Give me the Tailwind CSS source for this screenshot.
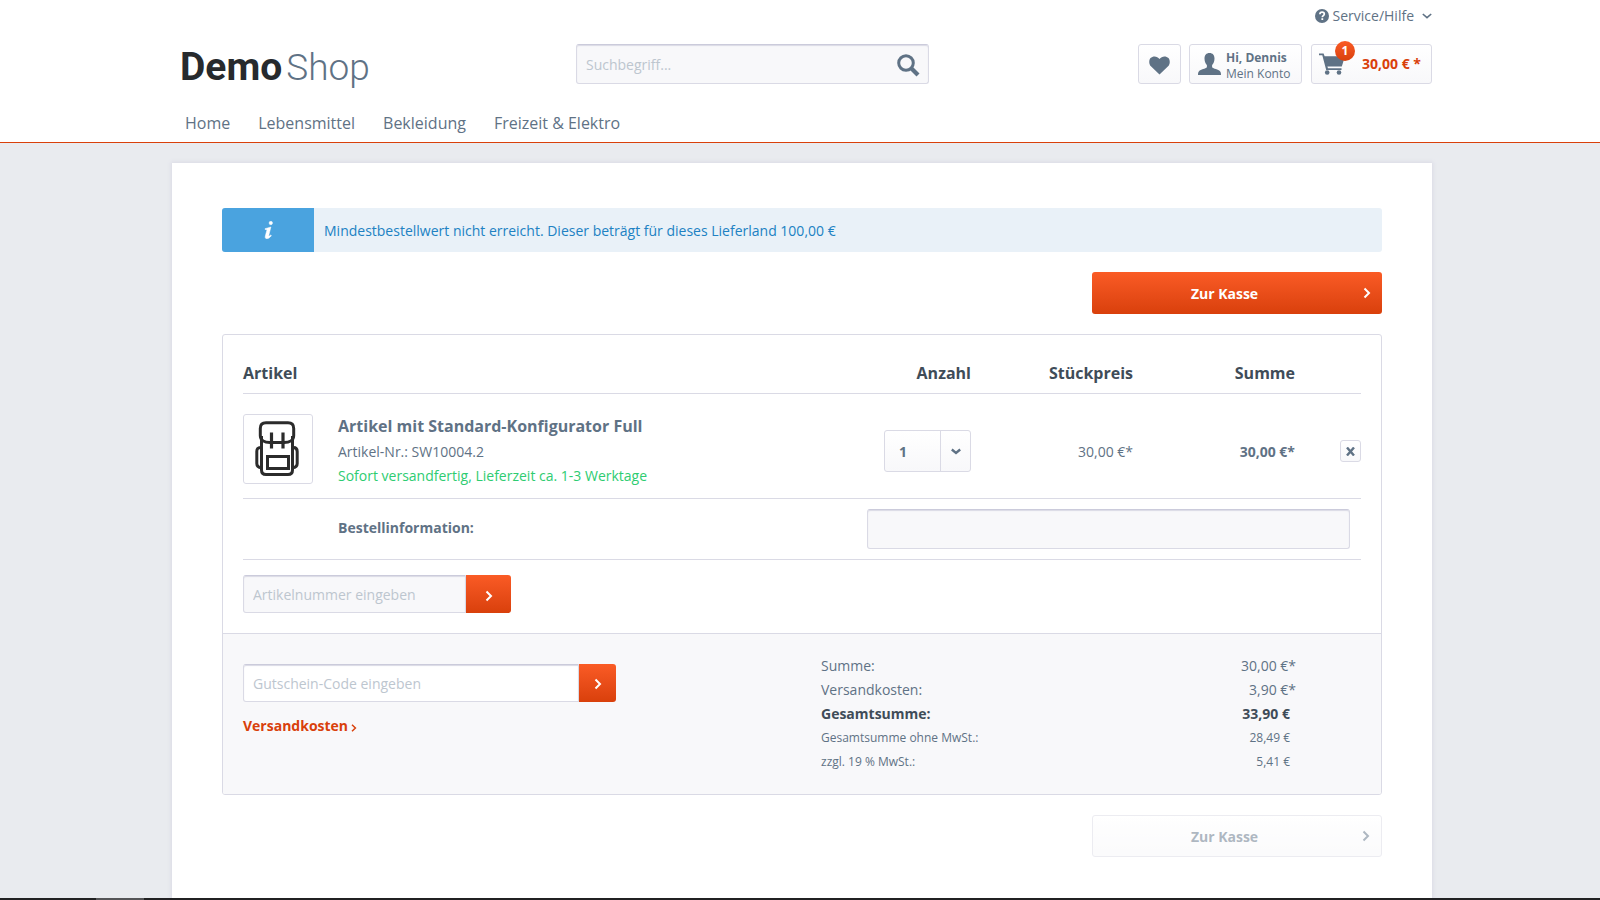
<!DOCTYPE html>
<html lang="de">
<head>
<meta charset="utf-8">
<title>Warenkorb | DemoShop</title>
<script src="https://cdn.jsdelivr.net/npm/@tailwindcss/browser@4"></script>
</head>
<body class="flex min-h-screen flex-col bg-[#e9ebef] font-['Open_Sans',sans-serif] text-sm text-[#5f7285]">
<svg class="hidden" aria-hidden="true">
  <symbol id="arrow-right" viewBox="0 0 8 12"><path d="M1.5 1.5 6 6l-4.500 4.500" fill="none" stroke="currentColor" stroke-width="2"/></symbol>
  <symbol id="arrow-down" viewBox="0 0 10 6"><path d="M.8 1 5 4.600 9.200 1" fill="none" stroke="currentColor" stroke-width="1.600"/></symbol>
</svg>

<header class="border-b border-[#d9400b] bg-white pl-1">
  <div class="mx-auto max-w-[1260px]">
    <div class="flex h-11 justify-end">
      <button type="button" class="flex h-8 items-center text-sm">
        <svg class="mr-1 size-3.5" viewBox="0 0 14 14"><circle cx="7" cy="7" r="7" fill="#5f7285"/><path d="M4.900 5.300C4.900 3.900 5.800 3.100 7.100 3.100s2.200.8 2.200 1.900c0 1.600-2 1.600-2 3.200" fill="none" stroke="#fff" stroke-width="1.700"/><rect x="6.400" y="9.200" width="1.800" height="1.800" fill="#fff"/></svg>
        Service/Hilfe
        <svg class="ml-2 h-1.5 w-2.5"><use href="#arrow-down"/></svg>
      </button>
    </div>
    <div class="flex h-10 items-start">
      <a href="#" class="flex w-[404px] shrink-0 items-baseline gap-1 pl-2 font-['Roboto',sans-serif] leading-[46px]" aria-label="DemoShop"><span class="text-[39px] font-bold text-[#272a2d]">Demo</span><span class="text-[37px] font-light">Shop</span></a>
      <form class="relative w-[353px]">
        <input type="search" aria-label="Suchbegriff" placeholder="Suchbegriff..." class="block h-10 w-full rounded-[3px] border border-[#dadae5] border-t-[#cbcbdb] bg-[#f8f8fa] pr-12 pl-[9px] shadow-[inset_0_1px_1px_#dadae5] placeholder:text-[#bdc6cf]">
        <button type="submit" aria-label="Suchen" class="absolute top-2.5 right-[9px]"><svg class="size-[23px]" viewBox="0 0 23 23" fill="none" stroke="#5f7285"><circle cx="9" cy="9" r="7.300" stroke-width="3"/><path d="m14.500 14.500 6.500 6.500" stroke-width="4.200"/></svg></button>
      </form>
      <div class="ml-auto flex gap-2">
        <a href="#" aria-label="Merkzettel" class="flex h-10 w-[43px] items-center justify-center rounded-[3px] border border-[#dadae5] bg-linear-to-b from-white to-[#f8f8fa]"><svg class="mt-0.5 h-[19px] w-[21px]" viewBox="0 0 22 19" preserveAspectRatio="none"><path d="M11 18.500 2 10.300C-.3 8-.2 4 1.600 2.100 4-.3 8.600-.3 11 3 13.400-.3 18-.3 20.400 2.100c1.800 1.900 1.900 5.900-.4 8.200z" fill="#5f7285"/></svg></a>
        <a href="#" class="flex h-10 w-[113px] items-center gap-[5px] rounded-[3px] border border-[#dadae5] bg-linear-to-b from-white to-[#f8f8fa] pl-2"><svg class="h-[22px] w-[23px]" viewBox="0 0 23 22"><path d="M11.500 0c3.200 0 5 2.100 5 5.400 0 3-1.200 5.400-2.400 6.700v2.200c1.200 1.400 6.300 2.200 7.900 3.900.8.900 1 2 1 3.800H0c0-1.800.2-2.900 1-3.800 1.600-1.700 6.700-2.500 7.900-3.900v-2.200C7.700 10.800 6.500 8.400 6.500 5.400c0-3.300 1.800-5.400 5-5.400z" fill="#5f7285"/></svg><span class="mt-1 text-xs leading-4"><strong class="block">Hi, Dennis</strong>Mein Konto</span></a>
        <a href="#" aria-label="Warenkorb" class="relative ml-px flex h-10 w-[121px] items-center gap-[17px] rounded-[3px] border border-[#dadae5] bg-linear-to-b from-white to-[#f8f8fa] pl-[7px]"><svg class="h-[22px] w-[26px]" viewBox="0 0 26 22" fill="#5f7285"><path d="M0 .5h4.600l1 2.800H26l-3.200 10.200H8.400l.6 1.800h13.500v1.700H7.200L3.300 2.300H0z"/><circle cx="8.200" cy="19.500" r="2.300"/><circle cx="20" cy="19.500" r="2.300"/></svg><span class="absolute -top-1 left-[23px] size-5 rounded-full bg-linear-to-b from-[#fa5b25] to-[#d9400b] text-center text-xs leading-5 font-bold text-white">1</span><strong class="text-[#d9400b]">30,00&nbsp;€&nbsp;*</strong></a>
      </div>
    </div>
    <nav class="flex h-[58px] items-center gap-7 pt-5 pl-[13px] text-base">
      <a href="#">Home</a><a href="#">Lebensmittel</a><a href="#">Bekleidung</a><a href="#">Freizeit &amp; Elektro</a>
    </nav>
  </div>
</header>

<div class="flex flex-1 flex-col pt-5 pl-1">
  <main class="mx-auto w-full max-w-[1260px] flex-1 bg-white px-[50px] pt-[45px] pb-10 shadow-[0_0_4px_1px_#dadae5]">
    <div role="status" class="flex h-11 overflow-hidden rounded-[3px] bg-[#e9f1f8] text-[#2081c3]">
      <div class="flex w-[92px] items-center justify-center bg-[#4aa3df] pl-0.5"><svg class="h-[18px] w-2.5" viewBox="0 0 10 18" fill="#fff" stroke="#fff" stroke-width=".5"><circle cx="6.800" cy="2" r="1.700"/><path d="M1 7.700 6.900 6 4.800 14.300c-.2.900.4 1 1.900-.4l.7.800C5.800 16.800 4.300 17.700 2.800 17.700c-1.500 0-1.900-1.100-1.500-2.600l1.500-5.700c.2-.7-.3-1-1.800-1z"/></svg></div>
      <p class="self-center pt-0.5 pl-2.5">Mindestbestellwert nicht erreicht. Dieser beträgt für dieses Lieferland 100,00 €</p>
    </div>

    <div class="mt-5 flex justify-end">
      <button type="button" class="flex h-[42px] w-[290px] items-center rounded-[3px] bg-linear-to-b from-[#fa5b25] to-[#d9400b] pr-[11px] pl-3 font-bold text-white"><span class="flex-1 pt-0.5 pr-[18px]">Zur Kasse</span><svg class="h-3 w-2"><use href="#arrow-right"/></svg></button>
    </div>

    <section class="mt-5 overflow-hidden rounded-[3px] border border-[#dadae5]">
      <div class="px-5 pb-5">
        <table class="w-full border-collapse">
          <thead>
            <tr class="h-[58px] border-b border-[#dadae5] text-base text-[#3f4c58]">
              <th class="pt-[18px] text-left">Artikel</th><th class="w-[162px] pt-[18px] text-right">Anzahl</th><th class="w-[162px] pt-[18px] text-right">Stückpreis</th><th class="w-[162px] pt-[18px] text-right">Summe</th><th class="w-[66px]"></th>
            </tr>
          </thead>
          <tbody>
            <tr class="h-[105px] border-b border-[#dadae5]">
              <td>
                <div class="flex gap-[25px] pt-1">
                  <a href="#" aria-label="Artikel mit Standard-Konfigurator Full" class="mt-1.5 flex size-[70px] items-center justify-center rounded-[3px] border border-[#dadae5] pr-0.5"><svg class="h-14 w-11" viewBox="0 0 44 56" fill="none" stroke="#2b2b2b" stroke-width="3"><path d="M6.500 15v34c0 2.800 1.700 4.500 4.500 4.500h22c2.800 0 4.500-1.700 4.500-4.500V15"/><path d="M11 1.800h22c4 0 5.700 2.200 5.700 5.700v7c0 4.500-4 7-9.700 7H15c-5.700 0-9.700-2.500-9.700-7v-7c0-3.500 1.700-5.700 5.700-5.700z"/><path d="M16.500 11.500v16M28 11.500v16" stroke-width="3.200"/><rect x="12.500" y="35.500" width="21" height="12"/><path d="M6.500 26.500h-1c-2.500 0-3.700 1.500-3.700 4v12c0 2.500 1.500 4 4.700 4.300M37.500 26.500h1c2.500 0 3.700 1.500 3.700 4v12c0 2.500-1.500 4-4.700 4.300"/></svg></a>
                  <div class="mt-1 leading-6"><a href="#" class="block text-base leading-7 font-bold">Artikel mit Standard-Konfigurator Full</a><p>Artikel-Nr.: SW10004.2</p><p class="text-[#2ecc71]">Sofort versandfertig, Lieferzeit ca. 1-3 Werktage</p></div>
                </div>
              </td>
              <td class="pt-2.5">
                <div class="relative ml-auto w-[87px]">
                  <select aria-label="Anzahl" class="block h-[42px] w-full appearance-none rounded-[3px] border border-[#dadae5] bg-linear-to-b from-white to-[#f8f8fa] pt-0.5 pl-3.5 font-bold"><option>1</option><option>2</option><option>3</option></select>
                  <span class="pointer-events-none absolute inset-y-0 right-0 flex w-[31px] items-center justify-center border-l border-[#dadae5] pt-0.5"><svg class="h-[7px] w-2.5" viewBox="0 0 10 7"><path d="M.8 1.500 5 4.900 9.200 1.500" fill="none" stroke="#5f7285" stroke-width="2.400"/></svg></span>
                </div>
              </td>
              <td class="pt-3 text-right">30,00&nbsp;€*</td>
              <td class="pt-3 text-right font-bold">30,00&nbsp;€*</td>
              <td class="pt-2.5"><button type="button" aria-label="Artikel entfernen" class="ml-auto flex h-[22px] w-[21px] items-center justify-center rounded-[3px] border border-[#dadae5] bg-linear-to-b from-white to-[#f8f8fa] pt-0.5"><svg class="size-[9px]" viewBox="0 0 9 9"><path d="m1 .5 7 8m0-8-7 8" stroke="#5f7285" stroke-width="2.400"/></svg></button></td>
            </tr>
            <tr class="h-[61px] border-b border-[#dadae5]">
              <td colspan="5"><div class="flex items-center justify-between pr-[11px] pl-[95px]"><label for="info" class="pb-0.5 font-bold">Bestellinformation:</label><input id="info" type="text" class="block h-10 w-[483px] rounded-[3px] border border-[#dadae5] border-t-[#cbcbdb] bg-[#f8f8fa] px-2.5 shadow-[inset_0_1px_1px_#dadae5]"></div></td>
            </tr>
          </tbody>
        </table>
        <form class="mt-[15px] flex h-[38px] w-[268px]">
          <input type="text" aria-label="Artikelnummer" placeholder="Artikelnummer eingeben" class="min-w-0 flex-1 rounded-l-[3px] border border-[#dadae5] border-t-[#cbcbdb] bg-[#f8f8fa] px-[9px] pt-0.5 shadow-[inset_0_1px_1px_#dadae5] placeholder:text-[#bdc6cf]">
          <button type="submit" aria-label="Hinzufügen" class="flex w-[45px] items-center justify-center rounded-r-[3px] bg-linear-to-b from-[#fa5b25] to-[#d9400b] pt-1 text-white"><svg class="h-3 w-2"><use href="#arrow-right"/></svg></button>
        </form>
      </div>

      <div class="flex border-t border-[#dadae5] bg-[#f8f8fa] px-5 pb-5">
        <div class="w-[578px] pt-[30px]">
          <form class="flex h-[38px] w-[373px]">
            <input type="text" aria-label="Gutschein-Code" placeholder="Gutschein-Code eingeben" class="min-w-0 flex-1 rounded-l-[3px] border border-[#dadae5] border-t-[#cbcbdb] bg-white px-[9px] pt-0.5 shadow-[inset_0_1px_1px_#dadae5] placeholder:text-[#bdc6cf]">
            <button type="submit" aria-label="Einlösen" class="flex w-[37px] items-center justify-center rounded-r-[3px] bg-linear-to-b from-[#fa5b25] to-[#d9400b] pt-0.5 text-white"><svg class="h-3 w-2"><use href="#arrow-right"/></svg></button>
          </form>
          <a href="#" class="mt-3 inline-flex items-center gap-[3px] leading-6 font-bold text-[#d9400b]">Versandkosten<svg class="mt-1 h-2 w-1.5" viewBox="0 0 6 8"><path d="m1 .8 3.400 3.200L1 7.200" fill="none" stroke="currentColor" stroke-width="1.500"/></svg></a>
        </div>
        <dl class="flex-1 pt-5 pr-[65px] leading-6">
          <div class="flex justify-between"><dt>Summe:</dt><dd>30,00&nbsp;€*</dd></div>
          <div class="flex justify-between"><dt>Versandkosten:</dt><dd>3,90&nbsp;€*</dd></div>
          <div class="flex justify-between pr-1.5 font-bold text-[#3f4c58]"><dt>Gesamtsumme:</dt><dd>33,90&nbsp;€</dd></div>
          <div class="flex justify-between pr-1.5 text-xs leading-6"><dt>Gesamtsumme ohne MwSt.:</dt><dd>28,49&nbsp;€</dd></div>
          <div class="flex justify-between pr-1.5 text-xs leading-6"><dt>zzgl. 19&nbsp;% MwSt.:</dt><dd>5,41&nbsp;€</dd></div>
        </dl>
      </div>
    </section>

    <div class="mt-5 flex justify-end">
      <button type="button" disabled class="flex h-[42px] w-[290px] items-center rounded-[3px] border border-[#dadae5] bg-linear-to-b from-white to-[#f8f8fa] pr-[11px] pl-3 font-bold opacity-50"><span class="flex-1 pt-0.5 pr-[18px]">Zur Kasse</span><svg class="h-3 w-2"><use href="#arrow-right"/></svg></button>
    </div>
  </main>
</div>
<footer class="h-0.5 bg-[#212123] pl-24"><div class="h-full w-12 bg-[#555557]"></div></footer>
</body>
</html>
